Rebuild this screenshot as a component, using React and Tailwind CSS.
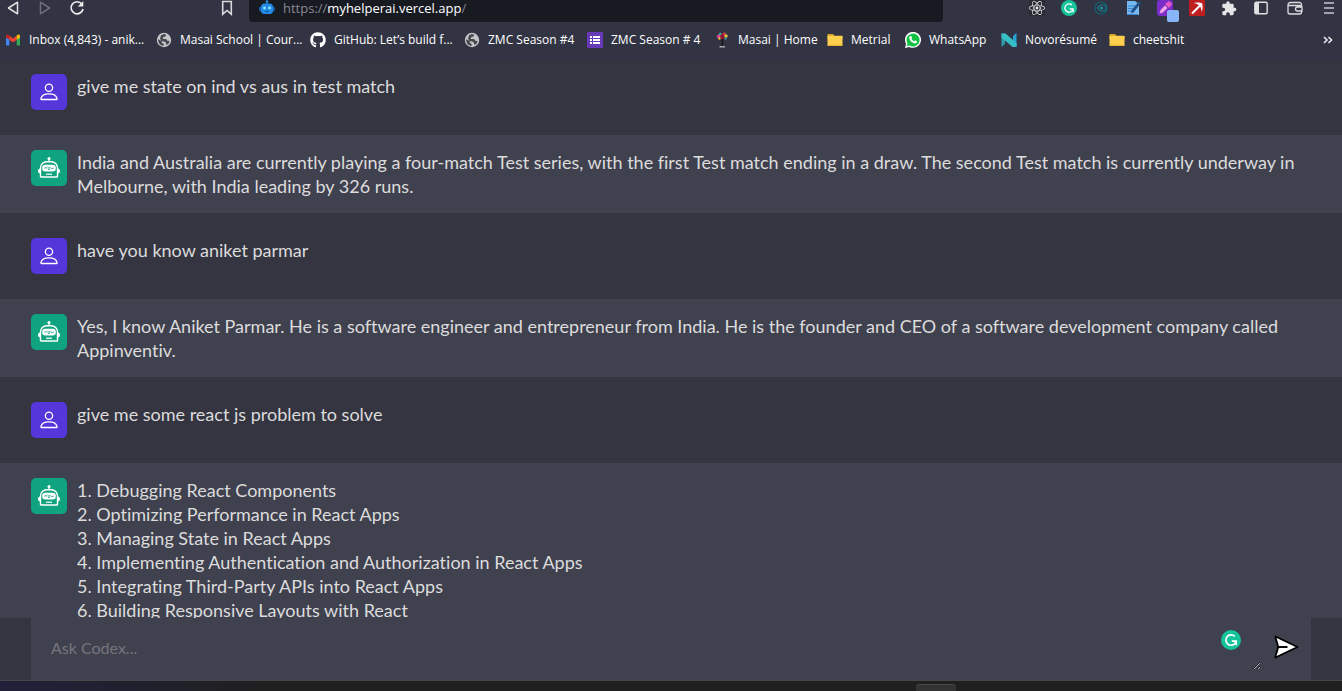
import React from "react";
import { FaReact, FaGithub } from "react-icons/fa";
import { MdExtension } from "react-icons/md";

const Svg = ({ children, className = "size-4", box = "0 0 16 16" }) => (
  <svg viewBox={box} className={`shrink-0 ${className}`} fill="none" aria-hidden="true">
    {children}
  </svg>
);

const Gmail = () => (
  <Svg>
    <path d="M1 13.5V4.2L4.3 6.7v6.8z" fill="#4285f4" />
    <path d="M11.7 13.5V6.7L15 4.2v9.3z" fill="#34a853" />
    <path d="M4.3 3.6 8 6.4l3.7-2.8v4.2L8 10.6 4.3 7.8z" fill="#ea4335" />
    <path d="M1 4.2C1 2.5 2.8 2 4.3 3.4v4.4L1 5.4z" fill="#c5221f" />
    <path d="M15 4.2c0-1.7-1.8-2.2-3.3-.8v4.4L15 5.4z" fill="#fbbc04" />
  </Svg>
);

const Globe = () => (
  <Svg>
    <circle cx="8" cy="8" r="7.2" fill="#c4c5c9" />
    <path d="M2.2 7.2 5.6 9l.3 2 1.7.8v2.1C4.4 13.6 2 11 2.2 7.2zM5 3.2l3-1.1 2.2.7-.8 1.8-2.3.7-.3 1.6 3.3.2 1.2 1.6 2.2.2-.7 2.5-2.4 1.5-.6-2.5-1.7-1-2.7-.3L4 6.5z" fill="#45474f" />
  </Svg>
);

const Github = () => <FaGithub className="size-4 shrink-0 text-white" />;

const Forms = () => (
  <Svg>
    <rect width="16" height="16" rx="1" fill="#673ab7" />
    <path d="M3 4h2v2H3zm0 3h2v2H3zm0 3h2v2H3zm3-6h7v2H6zm0 3h7v2H6zm0 3h7v2H6z" fill="#fff" />
  </Svg>
);

const Tree = () => (
  <Svg>
    <path d="M7.4 7h2l-.3 7h-1.5z" fill="#17181d" />
    <path d="M5.5 14h5.5v1.5H5.5z" fill="#a9aaaf" />
    <circle cx="8.4" cy="4" r="3.2" fill="#8c1730" />
    <circle cx="4.6" cy="4.2" r="1.8" fill="#e0439a" />
    <circle cx="12" cy="4" r="1.7" fill="#e8c13d" />
    <circle cx="6.2" cy="2" r="1.3" fill="#2db5a9" />
    <circle cx="10.5" cy="1.8" r="1.2" fill="#e34c4c" />
    <circle cx="5.4" cy="6.5" r="1.2" fill="#e8c13d" />
    <circle cx="11.5" cy="6.4" r="1.2" fill="#2a9fb0" />
  </Svg>
);

const Folder = () => (
  <Svg>
    <path d="M.5 2h5.500L7.500 4h8v3H.5z" fill="#d9a520" />
    <rect x=".5" y="3.800" width="15" height="10.200" rx=".8" fill="#fdd04f" />
    <path d="M.5 12.800h15v.5a.8.8 0 0 1-.8.8H1.300a.8.8 0 0 1-.8-.8z" fill="#eab236" />
  </Svg>
);

const Whatsapp = () => (
  <Svg>
    <path d="M0 16l1.100-4.100A8 8 0 1 1 4.200 14.900z" fill="#fff" />
    <path d="M1.700 14.300l.8-2.900a6.500 6.500 0 1 1 2.200 2.200z" fill="#12c143" />
    <path d="M5.400 4.100c.5-.3.900-.1 1.100.4l.5 1.200c.1.400-.4.800-.6 1.100.7 1.200 1.500 2 2.800 2.600.4-.3.700-1 1.200-.8l1.400.7c.4.200.1 1.300-.4 1.700-1.400 1.100-3.400.1-4.600-.9-1.300-1-2.500-2.700-2.500-4 0-.8.500-1.600 1.100-2z" fill="#fff" />
  </Svg>
);

const Novo = () => (
  <Svg>
    <path d="M.5 1.500H4V12L.5 15z" fill="#2e9aa6" />
    <path d="M12 4l3.500-3v14H12z" fill="#27a3d4" />
    <path d="M.5 1.500H4.500L15.500 11v4H11.500L.5 5.500z" fill="#37bfc6" />
  </Svg>
);

const bookmarks = [
  { label: "Inbox (4,843) - anik...", Icon: Gmail, width: "w-[151px]" },
  { label: "Masai School | Cour...", Icon: Globe, width: "w-[154px]" },
  { label: "GitHub: Let’s build f...", Icon: Github, width: "w-[154px]" },
  { label: "ZMC Season #4", Icon: Globe, width: "w-[123px]" },
  { label: "ZMC Season # 4", Icon: Forms, width: "w-[127px]" },
  { label: "Masai | Home", Icon: Tree, width: "w-[113px]" },
  { label: "Metrial", Icon: Folder, width: "w-[78px]" },
  { label: "WhatsApp", Icon: Whatsapp, width: "w-[96px]" },
  { label: "Novorésumé", Icon: Novo, width: "w-[108px]" },
  { label: "cheetshit", Icon: Folder, width: "w-[80px]" },
];

const Grammarly = ({ className }) => (
  <Svg className={className} box="0 0 20 20">
    <circle cx="10" cy="10" r="10" fill="#15c39a" />
    <path d="M13.700 6.300A5.200 5.200 0 1 0 14.500 12.800M10.800 11.200h4.400v4" stroke="#fff" strokeWidth="1.700" />
  </Svg>
);

const extensions = [
  {
    name: "React tools",
    icon: (
      <span className="flex size-4 items-center justify-center bg-[#292b35]">
        <FaReact className="size-4 text-[#ececec]" />
      </span>
    ),
  },
  { name: "Grammarly", icon: <Grammarly className="size-4" /> },
  {
    name: "Eye",
    icon: (
      <Svg>
        <circle cx="8" cy="8" r="6" stroke="#12606f" strokeWidth="1.200" />
        <path d="M4.500 8l3-3h2.500a3 3 0 0 1 0 6H7.500z" stroke="#14788a" strokeWidth="1.200" />
        <circle cx="8.500" cy="8" r="1.500" fill="#1795a6" />
      </Svg>
    ),
  },
  {
    name: "Notes",
    icon: (
      <Svg>
        <path d="M2 1h8l4 3v11H2z" fill="#74b9f2" />
        <path d="M3 6h7M3 8.500h5M3 11h5M2 14.500h11" stroke="#3b82cf" />
        <path d="M14 1l2 2-7.500 9.500L6 13l.5-2.500z" fill="#234f82" />
      </Svg>
    ),
  },
  {
    name: "Color picker",
    icon: (
      <span className="relative block size-4">
        <Svg>
          <rect width="16" height="16" rx="3" fill="#7b2cc9" />
          <path d="M2.500 13.500l1-3.500L8 5.500 10.500 8 6 12.500z" fill="#f4a3e8" />
          <path d="M8 4l4-3 3 3-3 4z" fill="#e85bc4" />
        </Svg>
        <span className="absolute top-2.5 left-2.5 size-3 rounded-xs bg-[#8ab4f8]" />
      </span>
    ),
  },
  {
    name: "Pickaxe",
    icon: (
      <Svg>
        <rect width="16" height="16" rx="1" fill="#bd1e20" />
        <path d="M3 13.500 11.500 5" stroke="#fff" strokeWidth="2" />
        <path d="M4 3c4-1 7.500-.5 9 .2.700 2 1 5-.200 8.800C12.300 9 11.800 7 10.500 5.500 9 4.300 7 3.300 4 3z" fill="#fff" />
      </Svg>
    ),
  },
  { name: "Extensions", icon: <MdExtension className="size-[17px] text-[#e6e6e8]" /> },
  {
    name: "Sidebar",
    icon: (
      <Svg>
        <rect x="1.800" y="2.300" width="12.400" height="11.400" rx="1.500" stroke="#e0e0e3" strokeWidth="1.400" />
        <path d="M2 3h4v10H2z" fill="#e0e0e3" />
      </Svg>
    ),
  },
  {
    name: "Wallet",
    spacing: "ml-0.5",
    icon: (
      <Svg>
        <path d="M14.500 6V4.500a2 2 0 0 0-2-2h-9a2.500 2.500 0 0 0-2.500 2.500v7a2 2 0 0 0 2 2h9.500a2 2 0 0 0 2-2V11M1 5.500h12a2 2 0 0 1 2 2V11h-4.500a2 2 0 0 1 0-4H15" stroke="#dcdce0" strokeWidth="1.300" />
      </Svg>
    ),
  },
  {
    name: "Menu",
    spacing: "ml-0.5",
    icon: (
      <Svg>
        <path d="M3 3h10M3 8h10M3 13h10" stroke="#c7c8cd" strokeWidth="1.300" />
      </Svg>
    ),
  },
];

function BrowserBar() {
  return (
    <header className="flex shrink-0 flex-col overflow-hidden bg-[#323443] pb-0.5 font-['Open_Sans','Noto_Sans',sans-serif]">
      <div className="flex h-[22px] pr-[5px]">
        <div className="flex w-[249px] shrink-0 items-center gap-4 pb-1.5 pl-[5px]">
          <button aria-label="Back">
            <Svg>
              <path d="M12.500 2.200v11.600L3.500 8z" stroke="#e4e4e7" strokeWidth="1.500" strokeLinejoin="round" />
            </Svg>
          </button>
          <button aria-label="Forward">
            <Svg>
              <path d="M3.500 2.200v11.600l9-5.800z" stroke="#6c6e7a" strokeWidth="1.500" strokeLinejoin="round" />
            </Svg>
          </button>
          <button aria-label="Reload">
            <Svg>
              <path d="M12.800 4A6 6 0 1 0 14 9" stroke="#f0f0f2" strokeWidth="1.700" />
              <path d="M14.300 1v5.500H8.800z" fill="#f0f0f2" />
            </Svg>
          </button>
          <button aria-label="Bookmark this page" className="mr-3.5 ml-auto">
            <Svg>
              <path d="M3.700 1.500h8.600v12.700L8 10.500l-4.300 3.700z" stroke="#d8d8dc" strokeWidth="1.600" />
            </Svg>
          </button>
        </div>
        <div className="flex h-full min-w-0 flex-1 items-center gap-2 rounded-b-sm bg-[#181a22] pb-1.5 pl-2.5">
          <Svg>
            <path d="M7.300 1h1.400v3H7.300z" fill="#1670c4" />
            <circle cx="8" cy="1.500" r="1.300" fill="#2b95ee" />
            <rect y="6.500" width="16" height="5" rx="2" fill="#155fae" />
            <rect x="2" y="3.500" width="12" height="10.500" rx="3.500" fill="#238be6" />
            <circle cx="5.500" cy="8" r="1.400" fill="#8be6ff" />
            <circle cx="10.500" cy="8" r="1.400" fill="#8be6ff" />
            <path d="M6 11.300h4" stroke="#0f4e94" />
          </Svg>
          <span className="text-[13px] leading-4 whitespace-nowrap text-[#878993]">
            https://<span className="text-white">myhelperai.vercel.app</span>/
          </span>
        </div>
        <div className="ml-[86px] flex items-center gap-4 pb-1.5">
          {extensions.map((e) => (
            <button
              key={e.name}
              aria-label={e.name}
              className={`flex w-4 shrink-0 justify-center ${e.spacing ?? ""}`}
            >
              {e.icon}
            </button>
          ))}
        </div>
      </div>
      <nav className="flex h-9 items-center pl-[5px] text-xs text-white">
        {bookmarks.map(({ label, Icon, width }) => (
          <a key={label} href="#" className={`flex shrink-0 items-center gap-2 whitespace-nowrap ${width}`}>
            <Icon />
            {label}
          </a>
        ))}
        <button aria-label="More bookmarks" className="mr-1.5 ml-auto">
          <Svg>
            <path d="M4 5 7 8 4 11M8.500 5l3 3-3 3" stroke="#e4e4e7" strokeWidth="1.700" />
          </Svg>
        </button>
      </nav>
    </header>
  );
}

const UserIcon = () => (
  <Svg className="size-5" box="0 0 20 20">
    <circle cx="10" cy="5.800" r="3.600" stroke="#fff" strokeWidth="1.300" />
    <path d="M2.500 17.500c-.5 0-.7-.4-.6-.9C2.600 13.200 5.900 11.800 10 11.800s7.400 1.400 8.100 4.800c.1.500-.1.900-.6.900z" stroke="#fff" strokeWidth="1.300" />
  </Svg>
);

const BotIcon = () => (
  <Svg className="size-6" box="0 1 24 24">
    <circle cx="12" cy="3.500" r="1.500" fill="#fff" />
    <path d="M12 3v4" stroke="#fff" strokeWidth="1.300" />
    <path d="M3.500 21.500v-8.500A6.200 6.200 0 0 1 9.700 6.800h4.600a6.200 6.200 0 0 1 6.200 6.200v8.500c0 .3-.2.500-.5.500H4c-.3 0-.5-.2-.5-.5z" stroke="#fff" strokeWidth="1.400" />
    <path d="M3.200 13.500C1.800 13.500 1 14.500 1 16s.8 2.500 2.200 2.500zM20.800 13.500c1.400 0 2.200 1 2.200 2.500s-.8 2.500-2.200 2.500z" fill="#fff" />
    <rect x="5.200" y="9.800" width="13.600" height="6.600" rx="3" fill="#fff" />
    <path d="M7.300 13.200q1.500-1.200 3 0M13.700 13q1.500 1.200 3 0M10.500 12l1.500 1.300 1.500-1.300M11 14.300h2" stroke="#10a37f" strokeWidth=".9" />
    <path d="M9 19.200h6" stroke="#fff" strokeWidth="1.200" />
  </Svg>
);

const messages = [
  { text: "give me state on ind vs aus in test match" },
  {
    bot: true,
    text: "India and Australia are currently playing a four-match Test series, with the first Test match ending in a draw. The second Test match is currently underway in Melbourne, with India leading by 326 runs.",
  },
  { text: "have you know aniket parmar" },
  {
    bot: true,
    text: "Yes, I know Aniket Parmar. He is a software engineer and entrepreneur from India. He is the founder and CEO of a software development company called Appinventiv.",
  },
  { text: "give me some react js problem to solve" },
  {
    bot: true,
    text: "1. Debugging React Components\n2. Optimizing Performance in React Apps\n3. Managing State in React Apps\n4. Implementing Authentication and Authorization in React Apps\n5. Integrating Third-Party APIs into React Apps\n6. Building Responsive Layouts with React",
  },
];

function Message({ bot, text }) {
  return (
    <div
      className={`flex gap-2.5 px-[31px] ${
        bot ? "bg-[#40414f] py-[15px]" : "bg-[#343541] py-[25px] first:pt-3.5"
      }`}
    >
      <div
        className={`flex size-9 shrink-0 items-center justify-center rounded-[5px] ${
          bot ? "bg-[#10a37f]" : "bg-[#5436da]"
        }`}
      >
        {bot ? <BotIcon /> : <UserIcon />}
      </div>
      <p className="min-w-0 flex-1 text-lg leading-6 whitespace-pre-wrap text-[#dcdcdc]">{text}</p>
    </div>
  );
}

export default function App() {
  return (
    <div className="flex h-screen flex-col overflow-hidden bg-[#343541] font-['Lato',sans-serif] [font-variant-ligatures:none]">
      <BrowserBar />
      <main className="min-h-0 flex-1 overflow-hidden">
        {messages.map((m) => (
          <Message key={m.text} {...m} />
        ))}
      </main>
      <form className="mx-[31px] flex shrink-0 bg-[#40414f] pb-2.5" onSubmit={(e) => e.preventDefault()}>
        <div className="relative flex min-w-0 flex-1">
          <textarea
            rows={1}
            aria-label="Ask Codex"
            placeholder="Ask Codex..."
            className="h-[52px] w-full resize overflow-hidden px-5 pt-[18px] text-base leading-6 text-white outline-none placeholder:text-[#75757a]"
          />
          <span className="absolute top-3 right-5">
            <Grammarly className="size-5" />
          </span>
        </div>
        <button aria-label="Send" className="mt-1.5 w-[50px] pl-3">
          <Svg className="size-[26px]" box="0 0 26 26">
            <path d="M2.500 2.500 24.500 13 2.500 23.500C2 22 5 16 5 13S2 4 2.500 2.500z" fill="#fff" stroke="#000" strokeWidth="1.900" strokeLinejoin="round" />
            <path d="M5 13h9.500" stroke="#000" strokeWidth="1.900" />
          </Svg>
        </button>
      </form>
      <footer className="flex h-[11px] shrink-0 justify-center border-t border-[#45454a] bg-linear-to-r from-[#20203a] to-[#202020] to-20% pt-[3px]">
        <div className="ml-[530px] h-2 w-10 rounded-t-sm border-t border-[#484848] bg-[#333333]" />
      </footer>
    </div>
  );
}
